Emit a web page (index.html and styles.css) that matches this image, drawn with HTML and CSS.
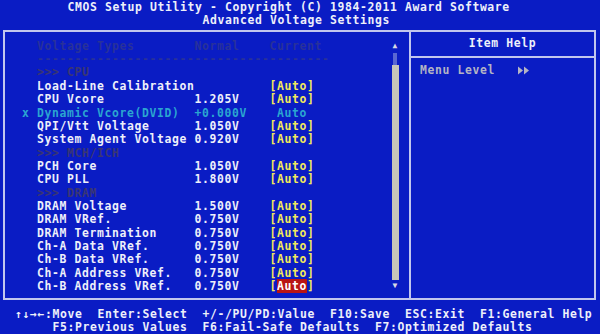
FILE: index.html
```html
<!DOCTYPE html>
<html lang="en">
<head>
  <meta charset="UTF-8">
  <meta name="viewport" content="width=device-width, initial-scale=1.0">
  <title>Advanced Voltage Settings</title>
  <link rel="stylesheet" href="styles.css">
</head>
<body>
  <div class="screen">
    <header class="title">
      <div class="title-main">CMOS Setup Utility - Copyright (C) 1984-2011 Award Software</div>
      <div class="title-sub">Advanced Voltage Settings</div>
    </header>

    <main class="box">
      <section class="list-pane">
        <div class="rows">
          <div class="row dim"><span></span><span>Voltage Types</span><span>Normal</span><span>Current</span></div>
          <div class="rule">---------------------------------------</div>
          <div class="section">&gt;&gt;&gt; CPU</div>
          <div class="row"><span></span><span>Load-Line Calibration</span><span></span><span class="opt">[Auto]</span></div>
          <div class="row"><span></span><span>CPU Vcore</span><span>1.205V</span><span class="opt">[Auto]</span></div>
          <div class="row locked"><span>x</span><span>Dynamic Vcore(DVID)</span><span>+0.000V</span><span>&nbsp;Auto</span></div>
          <div class="row"><span></span><span>QPI/Vtt Voltage</span><span>1.050V</span><span class="opt">[Auto]</span></div>
          <div class="row"><span></span><span>System Agent Voltage</span><span>0.920V</span><span class="opt">[Auto]</span></div>
          <div class="section">&gt;&gt;&gt; MCH/ICH</div>
          <div class="row"><span></span><span>PCH Core</span><span>1.050V</span><span class="opt">[Auto]</span></div>
          <div class="row"><span></span><span>CPU PLL</span><span>1.800V</span><span class="opt">[Auto]</span></div>
          <div class="section">&gt;&gt;&gt; DRAM</div>
          <div class="row"><span></span><span>DRAM Voltage</span><span>1.500V</span><span class="opt">[Auto]</span></div>
          <div class="row"><span></span><span>DRAM VRef.</span><span>0.750V</span><span class="opt">[Auto]</span></div>
          <div class="row"><span></span><span>DRAM Termination</span><span>0.750V</span><span class="opt">[Auto]</span></div>
          <div class="row"><span></span><span>Ch-A Data VRef.</span><span>0.750V</span><span class="opt">[Auto]</span></div>
          <div class="row"><span></span><span>Ch-B Data VRef.</span><span>0.750V</span><span class="opt">[Auto]</span></div>
          <div class="row"><span></span><span>Ch-A Address VRef.</span><span>0.750V</span><span class="opt">[Auto]</span></div>
          <div class="row"><span></span><span>Ch-B Address VRef.</span><span>0.750V</span><span class="opt">[<b class="selected">Auto</b>]</span></div>
        </div>
        <div class="scrollbar">
          <div class="arrow">&#9650;</div>
          <div class="track"></div>
          <div class="thumb"></div>
          <div class="arrow">&#9660;</div>
        </div>
      </section>

      <aside class="help-pane">
        <div class="help-title">Item Help</div>
        <div class="help-body">
          <span>Menu Level</span>
          <svg class="level" width="14" height="9" viewBox="0 0 14 9">
            <path d="M1 0.5 L6 4.5 L1 8.5 Z M7 0.5 L12 4.5 L7 8.5 Z" fill="#b4b4c4"/>
          </svg>
        </div>
      </aside>
    </main>

    <footer class="keys">
      <div class="keys-line first">
        <span>&#8593;&#8595;&#8594;&#8592;:Move</span>
        <span>Enter:Select</span>
        <span>+/-/PU/PD:Value</span>
        <span>F10:Save</span>
        <span>ESC:Exit</span>
        <span>F1:General Help</span>
      </div>
      <div class="keys-line second">
        <span>F5:Previous Values</span>
        <span>F6:Fail-Safe Defaults</span>
        <span>F7:Optimized Defaults</span>
      </div>
    </footer>
  </div>
</body>
</html>
```

FILE: styles.css
```css
*{margin: 0; padding: 0; box-sizing: border-box;}

/* one text cell of the 80x25 screen */
:root{
  --c: 7.5px;
  --r: 13.36px;
}

body{
  width: 600px;
  height: 334px;
  overflow: hidden;
  background-color: #0a1cc4;
  color: #eef0fa;
  font-family: "DejaVu Sans Mono", "Liberation Mono", monospace;
  font-weight: bold;
  font-size: 11.4px;
  letter-spacing: 0.64px;
  line-height: var(--r);
}

.screen{
  width: 600px;
  height: 334px;
  display: flex;
  flex-direction: column;
}

/* title */
.title{
  padding-top: 1px;
}

.title-main{
  padding-left: calc(var(--c) * 9);
  white-space: pre;
}

.title-sub{
  padding-left: calc(var(--c) * 27);
  white-space: pre;
}

/* main frame */
.box{
  margin: 2px 4px 0 3px;
  border: 2px solid #c2c6ee;
  display: grid;
  grid-template-columns: 404px 1fr;
}

.list-pane{
  display: flex;
  padding: 8px 0 4px 0;
}

.rows{
  flex: 1;
}

.row{
  display: grid;
  grid-template-columns: calc(var(--c) * 2) calc(var(--c) * 21) calc(var(--c) * 10) auto;
  padding-left: 17px;
  white-space: pre;
  height: var(--r);
}

.row.dim{
  color: #28319a;
}

.row.locked{
  color: #2aa6d0;
}

.opt{
  color: #f2ea5a;
}

.selected{
  background-color: #b81414;
  color: #ffffff;
  font-weight: bold;
}

.rule,
.section{
  padding-left: calc(17px + var(--c) * 2);
  height: var(--r);
  white-space: pre;
}

.rule{
  color: #28319a;
}

.section{
  color: #3a3672;
}

/* scrollbar */
.scrollbar{
  width: 8px;
  margin-right: 10px;
  display: flex;
  flex-direction: column;
  align-items: center;
}

.arrow{
  height: var(--r);
  font-size: 8px;
  letter-spacing: 0;
  line-height: 11px;
  color: #d8d8e4;
}

.track{
  width: 4px;
  height: 12px;
  background-color: #5a68d2;
}

.thumb{
  flex: 1;
  width: 7px;
  background-color: #c6c6ba;
}

/* help panel */
.help-pane{
  border-left: 2px solid #c2c6ee;
}

.help-title{
  text-align: center;
  padding: 5px 0 6px 0;
  border-bottom: 2px solid #c2c6ee;
}

.help-body{
  padding: 6px 0 0 9px;
  color: #b4b4c4;
  display: flex;
  align-items: center;
  gap: calc(var(--c) * 3);
}

.help-body .level{
  display: block;
}

/* key legend */
.keys{
  margin-top: 8px;
}

.keys-line{
  display: flex;
  gap: calc(var(--c) * 2);
  white-space: pre;
}

.keys-line.first{
  padding-left: calc(var(--c) * 2);
}

.keys-line.second{
  padding-left: calc(var(--c) * 7);
}
```
